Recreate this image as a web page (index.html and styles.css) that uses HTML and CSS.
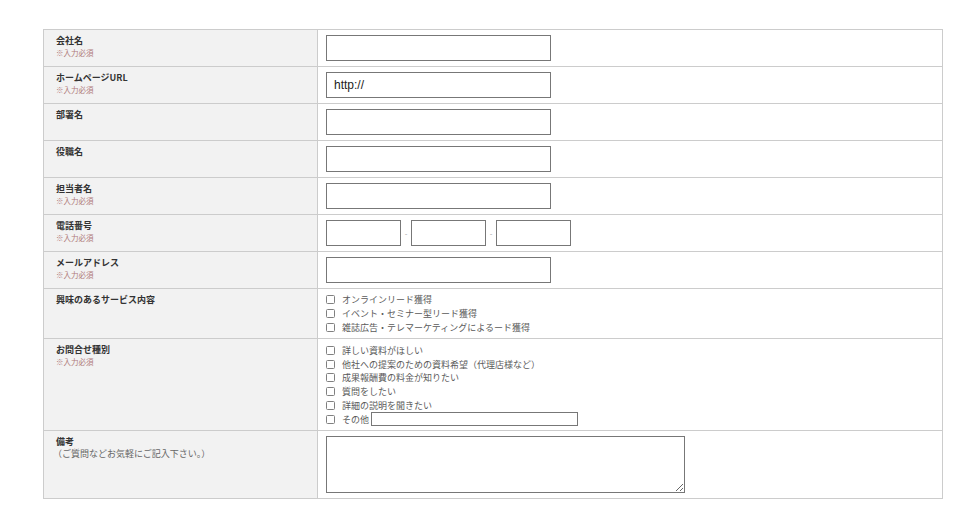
FILE: index.html
```html
<!DOCTYPE html>
<html lang="ja">
<head>
<meta charset="utf-8">
<link rel="stylesheet" href="styles.css">
</head>
<body>
<form class="form">
<table class="form-table">
  <tr>
    <th><span class="label">会社名</span><span class="req">※入力必須</span></th>
    <td><input class="text" type="text"></td>
  </tr>
  <tr>
    <th><span class="label">ホームページURL</span><span class="req">※入力必須</span></th>
    <td><input class="text" type="text" value="http://"></td>
  </tr>
  <tr>
    <th><span class="label">部署名</span></th>
    <td><input class="text" type="text"></td>
  </tr>
  <tr>
    <th><span class="label">役職名</span></th>
    <td><input class="text" type="text"></td>
  </tr>
  <tr>
    <th><span class="label">担当者名</span><span class="req">※入力必須</span></th>
    <td><input class="text" type="text"></td>
  </tr>
  <tr>
    <th><span class="label">電話番号</span><span class="req">※入力必須</span></th>
    <td>
      <div class="tel">
        <input class="text short" type="text"><span class="dash">-</span><input class="text short" type="text"><span class="dash">-</span><input class="text short" type="text">
      </div>
    </td>
  </tr>
  <tr>
    <th><span class="label">メールアドレス</span><span class="req">※入力必須</span></th>
    <td><input class="text" type="text"></td>
  </tr>
  <tr>
    <th class="th-list"><span class="label">興味のあるサービス内容</span></th>
    <td class="td-list td-list-short">
      <label class="opt"><input class="cb" type="checkbox">オンラインリード獲得</label>
      <label class="opt"><input class="cb" type="checkbox">イベント・セミナー型リード獲得</label>
      <label class="opt"><input class="cb" type="checkbox">雑誌広告・テレマーケティングによるード獲得</label>
    </td>
  </tr>
  <tr>
    <th class="th-list"><span class="label">お問合せ種別</span><span class="req">※入力必須</span></th>
    <td class="td-list">
      <label class="opt"><input class="cb" type="checkbox">詳しい資料がほしい</label>
      <label class="opt"><input class="cb" type="checkbox">他社への提案のための資料希望（代理店様など）</label>
      <label class="opt"><input class="cb" type="checkbox">成果報酬費の料金が知りたい</label>
      <label class="opt"><input class="cb" type="checkbox">質問をしたい</label>
      <label class="opt"><input class="cb" type="checkbox">詳細の説明を聞きたい</label>
      <label class="opt"><input class="cb" type="checkbox">その他<input class="other" type="text"></label>
    </td>
  </tr>
  <tr>
    <th><span class="label">備考</span><span class="note">（ご質問などお気軽にご記入下さい。）</span></th>
    <td><textarea class="area"></textarea></td>
  </tr>
</table>
</form>
</body>
</html>
```

FILE: styles.css
```css
html, body {
  margin: 0;
  padding: 0;
  background: #ffffff;
}

body {
  font-family: "Noto Sans CJK JP", "Noto Sans", sans-serif;
  color: #333333;
}

.form {
  padding: 29px 0 0 43px;
}

.form-table {
  width: 900px;
  border-collapse: collapse;
  table-layout: fixed;
}

.form-table th,
.form-table td {
  border: 1px solid #cccccc;
  padding: 4px 8px;
  vertical-align: top;
  text-align: left;
}

.form-table th {
  width: 253px;
  background: #f2f2f2;
  padding: 5px 8px 4px 12px;
  font-weight: normal;
}

.label {
  display: block;
  font-size: 9px;
  line-height: 12px;
  font-weight: bold;
  color: #333333;
}

.req {
  display: block;
  font-size: 7.5px;
  line-height: 11px;
  color: #b07a7a;
}

.note {
  display: block;
  font-size: 9px;
  line-height: 12px;
  color: #666666;
  margin-left: -3px;
}

.text {
  display: block;
  box-sizing: border-box;
  width: 225px;
  height: 26px;
  margin: 1px 0;
  padding: 0 7px;
  border: 1px solid #777777;
  border-radius: 0;
  background: #ffffff;
  font-family: "Liberation Sans", Arial, sans-serif;
  font-size: 12px;
  color: #222222;
  outline: none;
}

.tel {
  display: flex;
  align-items: center;
}

.text.short {
  width: 75px;
}

.dash {
  width: 10px;
  text-align: center;
  font-family: "Liberation Sans", Arial, sans-serif;
  font-size: 8px;
  color: #aaaaaa;
}

.td-list {
  padding-top: 4px;
  padding-bottom: 4px;
}

.td-list-short {
  padding-top: 5px;
  padding-bottom: 5px;
}

.opt {
  display: flex;
  align-items: center;
  height: 13.8px;
  font-size: 9px;
  color: #5a5a5a;
  white-space: nowrap;
}

.cb {
  appearance: none;
  -webkit-appearance: none;
  box-sizing: border-box;
  width: 9px;
  height: 9px;
  margin: 0 7px 0 0;
  border: 1px solid #808080;
  border-radius: 1.5px;
  background: #ffffff;
  flex: none;
}

.other {
  box-sizing: border-box;
  width: 207px;
  height: 14px;
  margin: 0 0 0 2px;
  padding: 0 3px;
  border: 1px solid #777777;
  border-radius: 0;
  background: #ffffff;
  font-size: 9px;
  outline: none;
}

.area {
  display: block;
  box-sizing: border-box;
  width: 359px;
  height: 57px;
  margin: 1px 0;
  padding: 2px 4px;
  border: 1px solid #777777;
  border-radius: 0;
  background: #ffffff;
  font-family: "Liberation Sans", Arial, sans-serif;
  font-size: 12px;
  outline: none;
}
```
